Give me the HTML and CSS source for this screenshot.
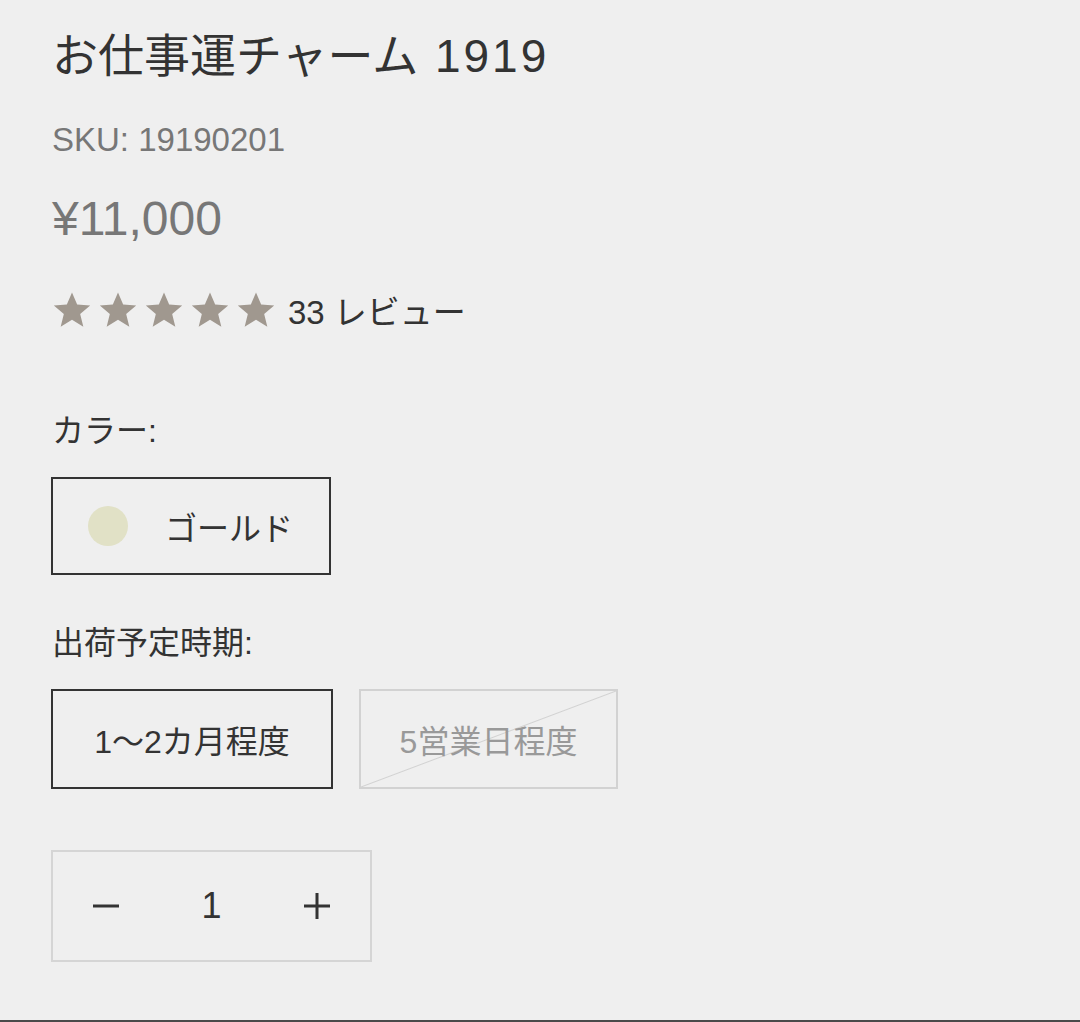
FILE: index.html
```html
<!DOCTYPE html>
<html lang="ja">

<head>
  <meta charset="UTF-8">
  <meta name="viewport" content="width=device-width, initial-scale=1.0">
  <title>お仕事運チャーム 1919</title>
  <link rel="stylesheet" href="styles.css">
</head>

<body>
  <div class="product">
    <h1 class="title">お仕事運チャーム <span class="num">1919</span></h1>
    <div class="sku">SKU: 19190201</div>
    <div class="price">¥11,000</div>

    <div class="rating">
      <div class="stars">
        <svg viewBox="0 0 24 24"><path d="M12 1.5l3.1 7.2 7.8.6-6 5.1 1.9 7.6L12 17.9 5.2 22l1.9-7.6-6-5.1 7.8-.6z"/></svg>
        <svg viewBox="0 0 24 24"><path d="M12 1.5l3.1 7.2 7.8.6-6 5.1 1.9 7.6L12 17.9 5.2 22l1.9-7.6-6-5.1 7.8-.6z"/></svg>
        <svg viewBox="0 0 24 24"><path d="M12 1.5l3.1 7.2 7.8.6-6 5.1 1.9 7.6L12 17.9 5.2 22l1.9-7.6-6-5.1 7.8-.6z"/></svg>
        <svg viewBox="0 0 24 24"><path d="M12 1.5l3.1 7.2 7.8.6-6 5.1 1.9 7.6L12 17.9 5.2 22l1.9-7.6-6-5.1 7.8-.6z"/></svg>
        <svg viewBox="0 0 24 24"><path d="M12 1.5l3.1 7.2 7.8.6-6 5.1 1.9 7.6L12 17.9 5.2 22l1.9-7.6-6-5.1 7.8-.6z"/></svg>
      </div>
      <span class="count">33 レビュー</span>
    </div>

    <div class="label label-color">カラー:</div>
    <div class="options">
      <div class="option option-color selected">
        <span class="swatch"></span>
        <span>ゴールド</span>
      </div>
    </div>

    <div class="label label-ship">出荷予定時期:</div>
    <div class="options">
      <div class="option option-ship selected">1〜2カ月程度</div>
      <div class="option option-ship disabled">5営業日程度</div>
    </div>

    <div class="qty">
      <button class="qty-btn" type="button">
        <svg viewBox="0 0 26 26"><path d="M0 13h26"/></svg>
      </button>
      <span class="qty-num">1</span>
      <button class="qty-btn" type="button">
        <svg viewBox="0 0 26 26"><path d="M0 13h26M13 0v26"/></svg>
      </button>
    </div>
  </div>
</body>

</html>
```

FILE: styles.css
```css
body {
  margin: 0;
  height: 1022px;
  box-sizing: border-box;
  background: #efefef;
  border-bottom: 2px solid #4a4a4a;
  font-family: 'Liberation Sans', 'Noto Sans CJK JP', sans-serif;
  color: #333;
  overflow: hidden;
}

.product {
  display: flex;
  flex-direction: column;
  align-items: flex-start;
  padding: 28px 52px 0;
}

.title {
  margin: 0;
  font-size: 46px;
  font-weight: normal;
  line-height: 56px;
}

.title .num {
  margin-left: 4px;
  letter-spacing: 3px;
}

.sku {
  margin-top: 36px;
  font-size: 33px;
  line-height: 40px;
  color: #777;
}

.price {
  margin-top: 31px;
  font-size: 48px;
  line-height: 56px;
  color: #777;
}

.rating {
  display: flex;
  align-items: center;
  height: 40px;
  margin-top: 43px;
}

.stars {
  display: flex;
  gap: 6px;
}

.stars svg {
  width: 40px;
  height: 40px;
  fill: #a0988f;
}

.count {
  margin-left: 12px;
  font-size: 33px;
}

.label {
  font-size: 32px;
  line-height: 40px;
}

.label-color {
  margin-top: 81px;
}

.label-ship {
  margin-top: 48px;
}

.options {
  display: flex;
  gap: 26px;
  margin-top: 26px;
}

.option {
  display: flex;
  align-items: center;
  justify-content: center;
  box-sizing: border-box;
  height: 100px;
  font-size: 32px;
  border: 2px solid #d2d2d2;
}

.option.selected {
  border-color: #333;
}

.option-color {
  width: 280px;
  height: 98px;
  justify-content: flex-start;
  padding-left: 35px;
  margin-left: -1px;
}

.swatch {
  width: 40px;
  height: 40px;
  margin-right: 37px;
  border-radius: 50%;
  background: #e1e1c6;
}

.option-ship {
  padding: 0 38px;
}

.option-ship.selected {
  width: 282px;
  margin-left: -1px;
}

.option-ship.disabled {
  width: 259px;
  color: #999;
  background: linear-gradient(to bottom right, transparent calc(50% - 1px), #d2d2d2 50%, transparent calc(50% + 1px));
}

.qty {
  display: flex;
  box-sizing: border-box;
  width: 321px;
  height: 112px;
  margin-top: 61px;
  margin-left: -1px;
  border: 2px solid #d5d5d5;
}

.qty-btn,
.qty-num {
  flex: 1;
  display: flex;
  align-items: center;
  justify-content: center;
}

.qty-btn {
  padding: 0;
  border: none;
  background: none;
}

.qty-btn svg {
  width: 26px;
  height: 26px;
  stroke: #333;
  stroke-width: 3;
}

.qty-num {
  font-size: 36px;
}
```
